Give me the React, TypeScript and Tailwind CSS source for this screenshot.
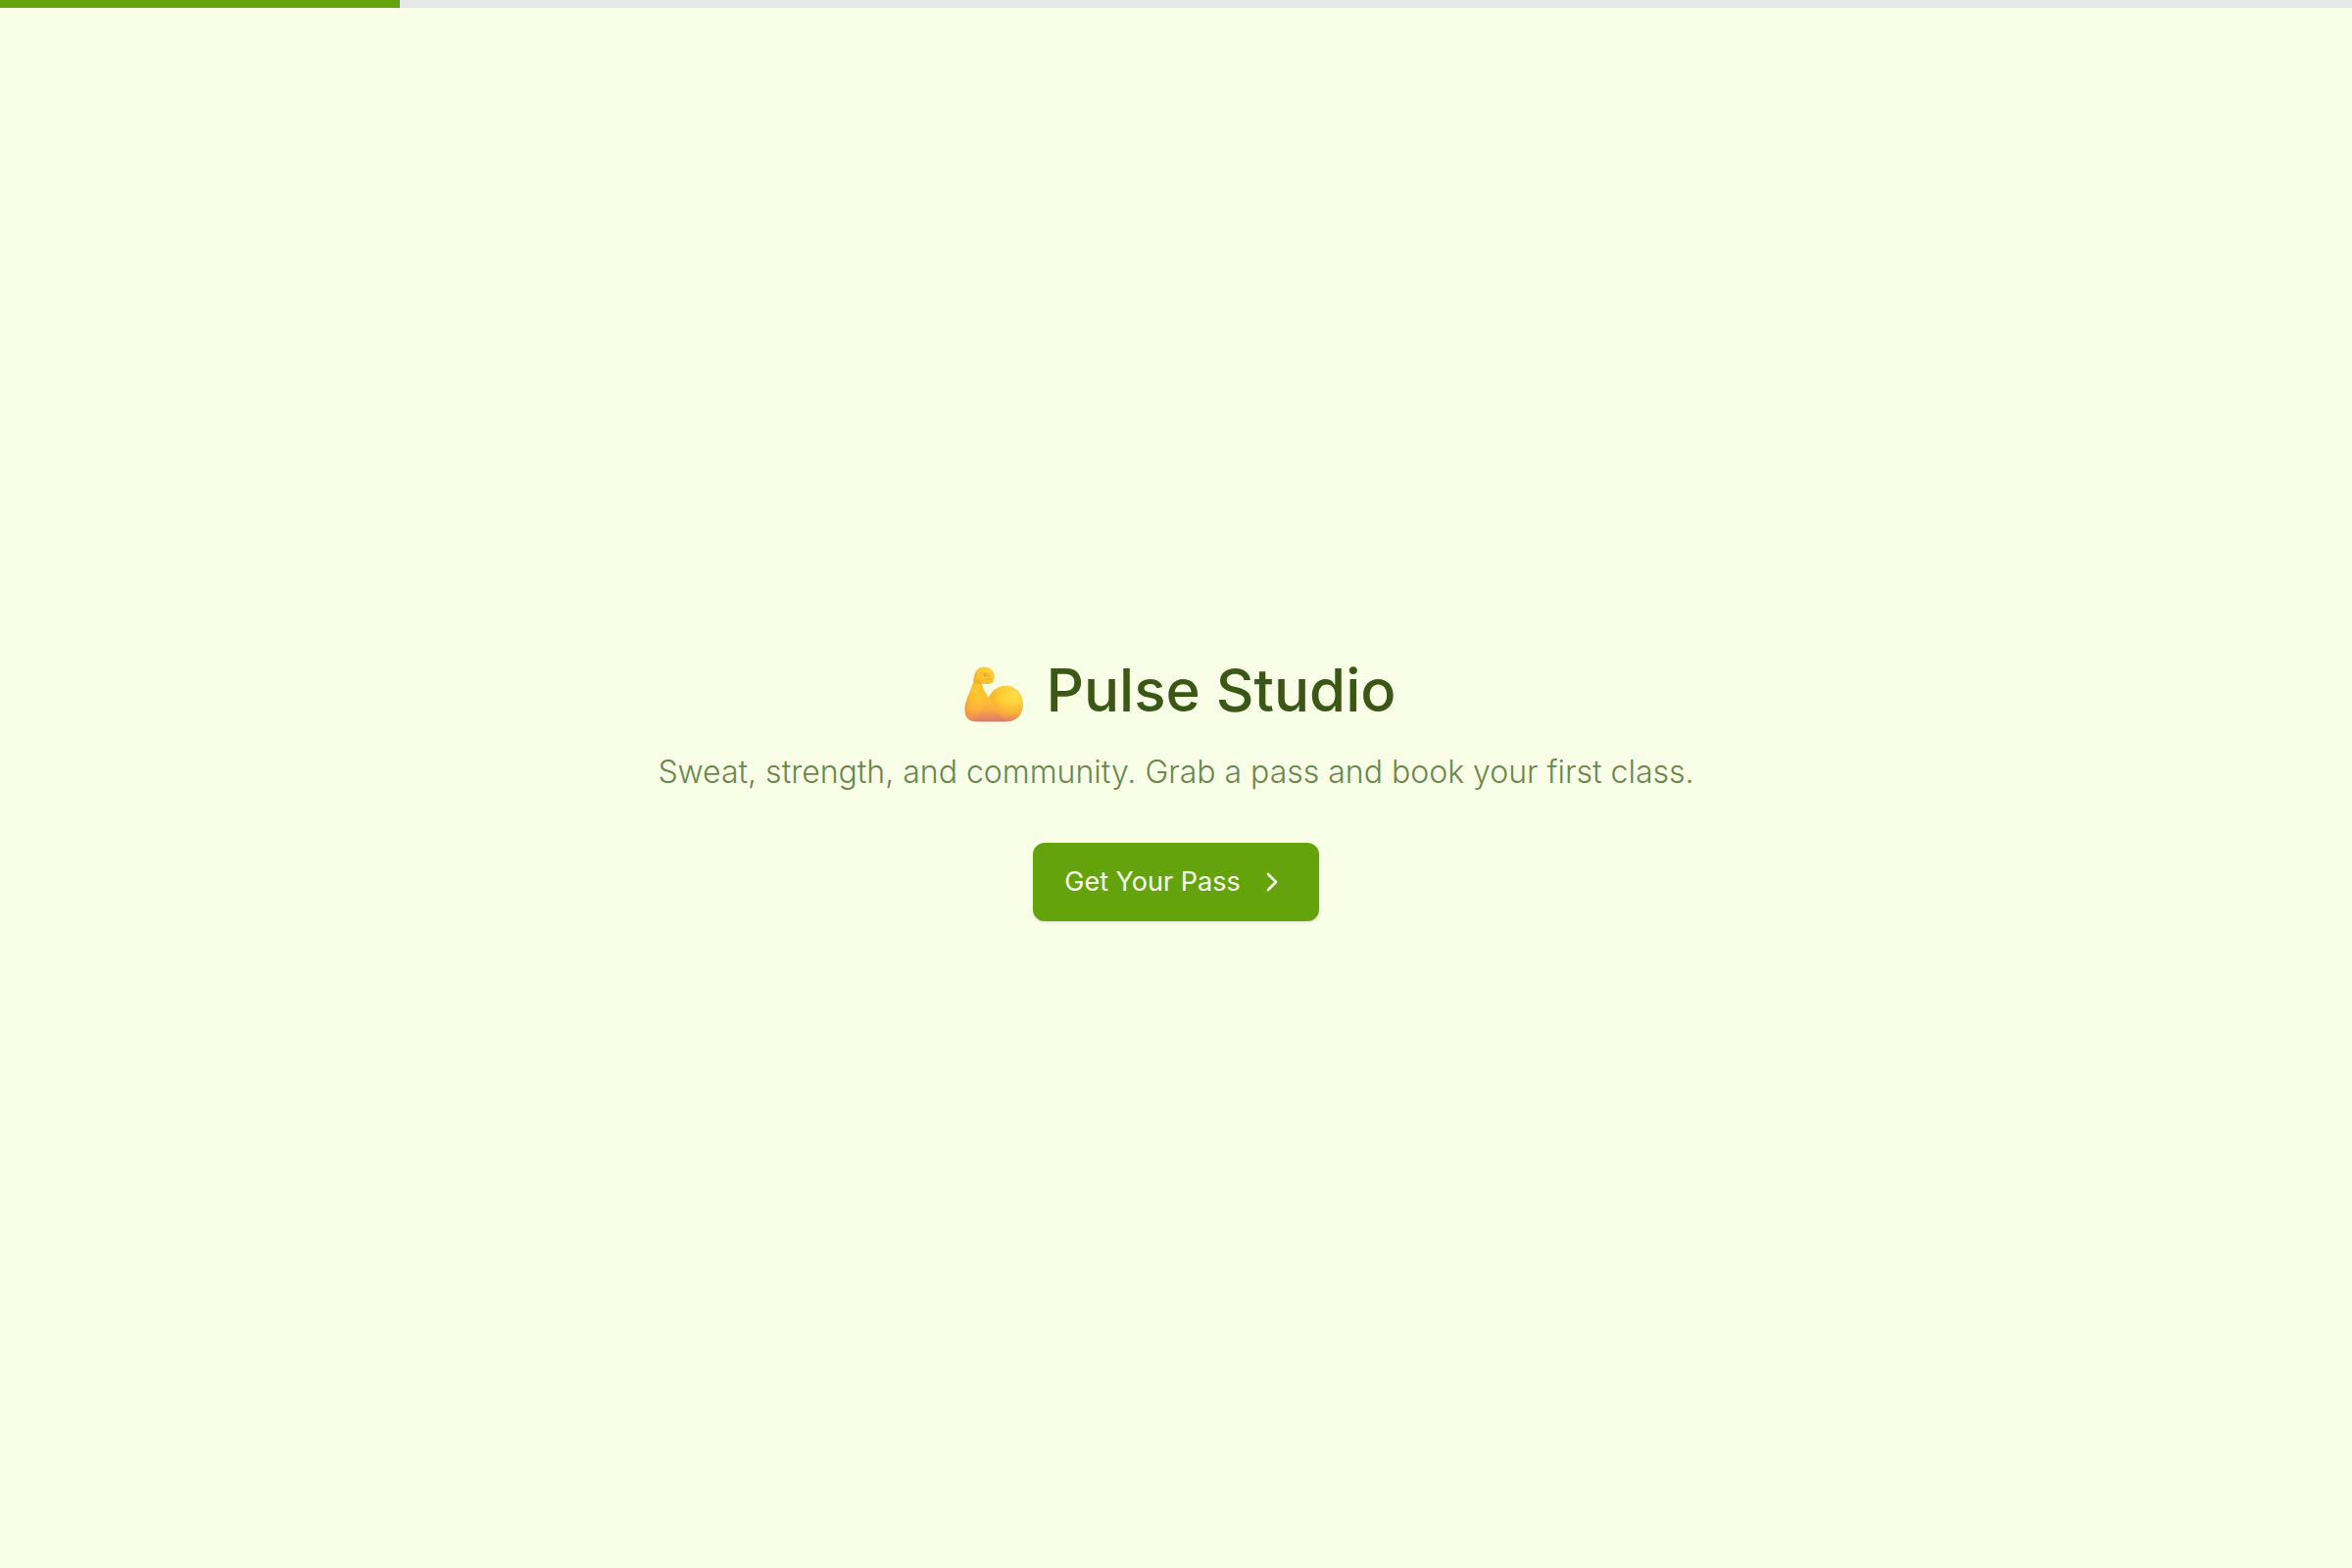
import { ChevronRight } from "lucide-react";

function FlexedArm() {
  return (
    <svg viewBox="46 42 180 174" className="mt-2 h-[58px] w-[60px] shrink-0" role="img" aria-label="Flexed arm">
      <defs>
        <linearGradient id="arm" x1="0" y1="44" x2="0" y2="214" gradientUnits="userSpaceOnUse">
          <stop offset="0" stopColor="#fcc230" />
          <stop offset="0.55" stopColor="#ffc62e" />
          <stop offset="0.78" stopColor="#fcb23c" />
          <stop offset="0.93" stopColor="#ea8a5c" />
          <stop offset="1" stopColor="#dc7b70" />
        </linearGradient>
        <linearGradient id="armSide" x1="48" y1="0" x2="120" y2="0" gradientUnits="userSpaceOnUse">
          <stop offset="0" stopColor="#f08c3c" stopOpacity="0.6" />
          <stop offset="0.4" stopColor="#ffb42e" stopOpacity="0.1" />
          <stop offset="1" stopColor="#ffd04a" stopOpacity="0" />
        </linearGradient>
        <radialGradient id="muscle" cx="196" cy="136" r="84" gradientUnits="userSpaceOnUse">
          <stop offset="0" stopColor="#ffe04c" />
          <stop offset="0.5" stopColor="#ffc932" />
          <stop offset="0.85" stopColor="#fdaf30" />
          <stop offset="1" stopColor="#fbb036" stopOpacity="0" />
        </radialGradient>
        <linearGradient id="muscleFade" x1="0" y1="155" x2="0" y2="214" gradientUnits="userSpaceOnUse">
          <stop offset="0" stopColor="#f09050" stopOpacity="0" />
          <stop offset="0.5" stopColor="#f3964c" stopOpacity="0.3" />
          <stop offset="1" stopColor="#dc7870" stopOpacity="0.9" />
        </linearGradient>
        <radialGradient id="fist" cx="118" cy="64" r="46" gradientUnits="userSpaceOnUse">
          <stop offset="0" stopColor="#ffd23c" />
          <stop offset="0.6" stopColor="#fec42e" />
          <stop offset="1" stopColor="#f8ae2c" />
        </radialGradient>
      </defs>
      <path
        d="M76 80 C72 102 62 124 54 144 C48 160 47 172 48 184 C50 203 62 214 80 214 L174 214 C204 213 225 194 225 161 C225 127 202 105 173 105 C148 105 131 120 121 140 C112 126 103 114 99 96 Z"
        fill="url(#arm)"
      />
      <path
        d="M76 80 C72 102 62 124 54 144 C48 160 47 172 48 184 C50 203 62 214 80 214 L110 214 L121 140 C112 126 103 114 99 96 Z"
        fill="url(#armSide)"
      />
      <path
        d="M121 140 C131 120 148 105 173 105 C202 105 225 127 225 161 C225 194 204 213 174 214 L165 204 C148 180 135 160 121 140 Z"
        fill="url(#muscle)"
      />
      <path
        d="M121 140 L121 152 C104 172 91 188 82 214 L174 214 C204 213 225 194 225 161 L190 150 Z"
        fill="url(#muscleFade)"
      />
      <path
        d="M74 92 C75 77 77 62 87 54 C94 48 103 46 111 47 C124 48 134 55 137 68 C139 76 138 86 134 92 C130 98 121 99 115 99 C109 100 104 98 99 97 C90 99 79 98 74 92 Z"
        fill="url(#fist)"
      />
      <path
        d="M94 67 C99 62 106 63 109 68 C114 65 121 68 123 73 C118 77 112 77 106 74 M104 85 C112 84 119 86 127 82 M99 97 C92 96 87 92 84 87"
        fill="none"
        stroke="#ee9a28"
        strokeWidth="4"
        strokeLinecap="round"
        opacity="0.5"
      />
      <circle cx="109" cy="71" r="4" fill="#e28a25" opacity="0.6" />
    </svg>
  );
}

export default function App() {
  return (
    <div className="flex min-h-screen flex-col bg-[#f9ffe7] font-['Inter',sans-serif]">
      <div
        role="progressbar"
        aria-label="Progress"
        aria-valuenow={17}
        aria-valuemin={0}
        aria-valuemax={100}
        className="h-2 w-full bg-gray-200"
      >
        <div className="h-full w-[17%] bg-[#65a30d]" />
      </div>
      <main className="flex flex-1 flex-col items-center justify-center">
        <h1 className="flex items-center gap-6 pl-2 text-[60px] leading-[72px] font-medium text-[#3a5716]">
          <FlexedArm />
          Pulse Studio
        </h1>
        <p className="mt-6 text-[32px] leading-[48px] font-light text-[#6b874d]">
          Sweat, strength, and community. Grab a pass and book your first class.
        </p>
        <button
          type="button"
          className="mt-12 flex h-20 items-center gap-4 rounded-xl bg-[#65a30d] px-8 text-[27px] font-normal text-[#fbffef] shadow-sm"
        >
          Get Your Pass
          <ChevronRight className="size-8" strokeWidth={2} />
        </button>
      </main>
    </div>
  );
}
